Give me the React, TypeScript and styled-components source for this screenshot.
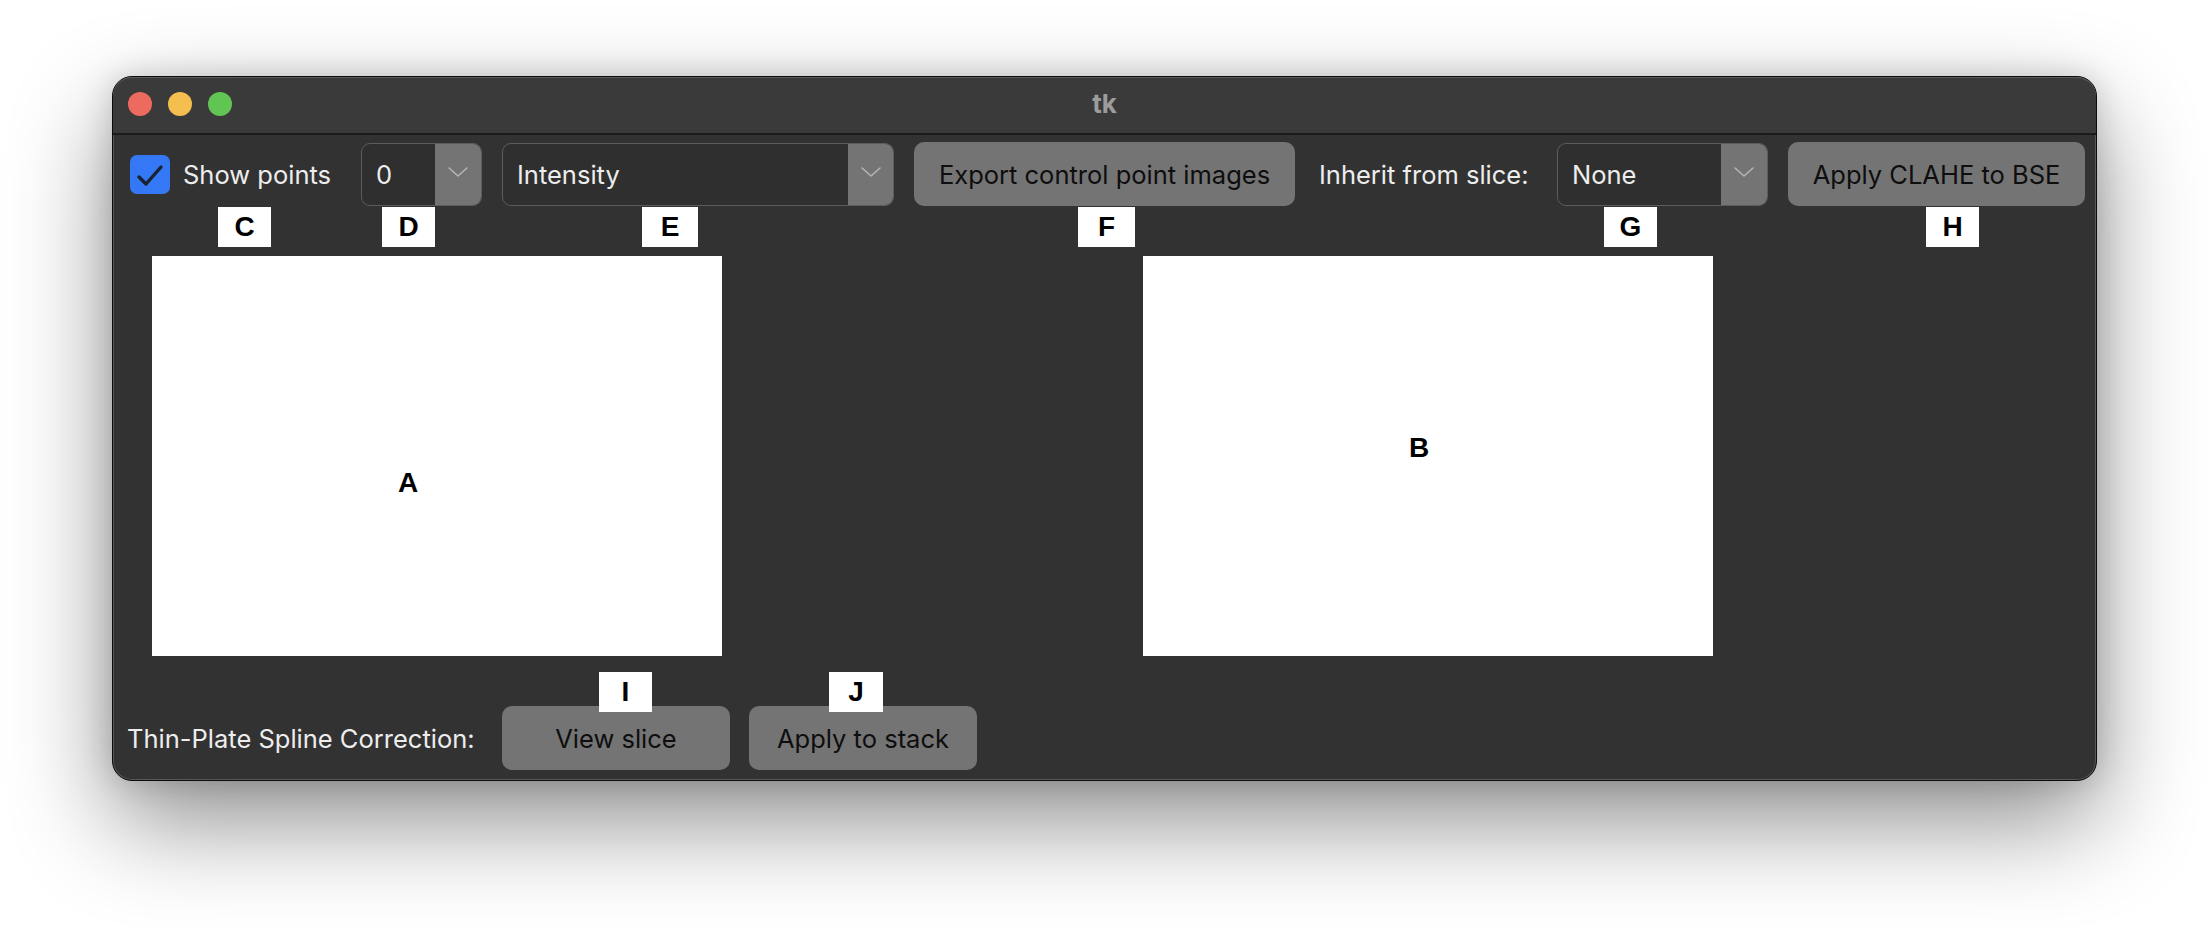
import * as React from "react";
import styled, { createGlobalStyle } from "styled-components";

const GlobalStyle = createGlobalStyle`
  html, body {
    margin: 0;
    padding: 0;
    background: #ffffff;
  }
  * {
    box-sizing: border-box;
  }
`;

const uiFont = `"Inter", "Noto Sans", "DejaVu Sans", sans-serif`;
const markFont = `"Liberation Sans", Arial, sans-serif`;

const Page = styled.div`
  width: 2208px;
  height: 928px;
  padding: 76px 0 0 112px;
  background: #ffffff;
  overflow: hidden;
`;

const Window = styled.div`
  position: relative;
  width: 1985px;
  height: 705px;
  border: 1px solid #0c0c0c;
  border-radius: 20px;
  background: #323232;
  box-shadow: inset 0 0 0 1px #575757, 0 40px 100px rgba(0, 0, 0, 0.45),
    0 0 30px rgba(0, 0, 0, 0.16);
  font-family: ${uiFont};
  display: flex;
  flex-direction: column;
`;

const TitleBar = styled.div`
  height: 58px;
  flex-shrink: 0;
  display: grid;
  grid-template-columns: 1fr auto 1fr;
  align-items: center;
  padding: 0 15px;
  background: #3a3a3a;
  border-bottom: 2px solid #1a1a1a;
  border-radius: 19px 19px 0 0;
  box-shadow: inset 0 1px 0 #5a5a5a;
`;

const Lights = styled.div`
  display: flex;
  gap: 16px;
  margin-top: -2px;
`;

const Light = styled.span<{ $color: string }>`
  width: 24px;
  height: 24px;
  border-radius: 50%;
  background: ${p => p.$color};
`;

const Title = styled.div`
  color: #9c9c9c;
  font-weight: 700;
  font-size: 26px;
  margin-top: -3px;
`;

const Body = styled.div`
  flex: 1;
  display: flex;
  flex-direction: column;
  padding: 7px 11px 10px 14px;
`;

const Toolbar = styled.div`
  display: grid;
  grid-template-columns: 211px 121px 392px 381px 222px 211px 297px;
  column-gap: 20px;
  height: 64px;
  align-items: center;
  padding-left: 3px;
`;

const CheckCell = styled.label`
  display: flex;
  align-items: center;
  gap: 13px;
`;

const CheckBox = styled.span`
  width: 40px;
  height: 39px;
  border-radius: 7px;
  background: #3478f6;
  display: flex;
  align-items: center;
  justify-content: center;
`;

const Label = styled.span<{ $pad?: number }>`
  color: #ededed;
  font-size: 25.5px;
  white-space: nowrap;
  padding-left: ${p => p.$pad || 0}px;
`;

const Combo = styled.div`
  display: flex;
  height: 63px;
  border: 1.5px solid #5c5c5c;
  border-radius: 9px;
  overflow: hidden;
  background: #2f2f2f;
`;

const ComboValue = styled.div`
  flex: 1;
  display: flex;
  align-items: center;
  padding-left: 14px;
  color: #ededed;
  font-size: 25.5px;
`;

const ComboArrow = styled.div<{ $w: number }>`
  width: ${p => p.$w}px;
  background: #747474;
  display: flex;
  align-items: center;
  justify-content: center;
  padding-bottom: 4px;
`;

const Button = styled.button.attrs({ type: "button" })<{ $w?: number }>`
  font: inherit;
  font-family: ${uiFont};
  font-size: 25.5px;
  color: #0e0e0e;
  background: #747474;
  border: 0;
  border-radius: 10px;
  height: 64px;
  width: ${p => (p.$w ? `${p.$w}px` : "100%")};
  padding: 0;
  white-space: nowrap;
  cursor: pointer;
`;

const Images = styled.div`
  display: flex;
  gap: 421px;
  margin-top: 50px;
  padding-left: 25px;
`;

const Canvas = styled.div`
  position: relative;
  width: 570px;
  height: 400px;
  background: #ffffff;
`;

const CanvasMark = styled.span`
  position: absolute;
  transform: translate(-50%, -50%);
  font-family: ${markFont};
  font-weight: 700;
  font-size: 28px;
  color: #000;
`;

const BottomRow = styled.div`
  display: flex;
  align-items: center;
  gap: 20px;
  margin-top: 50px;
  height: 64px;
`;

const BottomLabel = styled(Label)`
  width: 355px;
`;

const Badge = styled.span<{ $w: number }>`
  position: absolute;
  width: ${p => p.$w}px;
  height: 40px;
  background: #ffffff;
  color: #000;
  font-family: ${markFont};
  font-weight: 700;
  font-size: 28px;
  display: flex;
  align-items: center;
  justify-content: center;
  z-index: 2;
`;

function Chevron() {
  return (
    <svg width="20" height="10" viewBox="0 0 20 10">
      <polyline
        points="1,1 10,9 19,1"
        fill="none"
        stroke="#b4b4b4"
        strokeWidth="1.6"
        strokeLinecap="round"
        strokeLinejoin="round"
      />
    </svg>
  );
}

function Check() {
  return (
    <svg width="40" height="39" viewBox="0 0 40 39">
      <polyline
        points="9,22 16,29 31,12"
        fill="none"
        stroke="#1a2130"
        strokeWidth="3.4"
        strokeLinecap="round"
        strokeLinejoin="round"
      />
    </svg>
  );
}

function ComboBox(props: { value: string; arrow: number }) {
  return (
    <Combo>
      <ComboValue>{props.value}</ComboValue>
      <ComboArrow $w={props.arrow}>
        <Chevron />
      </ComboArrow>
    </Combo>
  );
}

const badges = [
  { letter: "C", x: 105, y: 130, w: 53 },
  { letter: "D", x: 269, y: 130, w: 53 },
  { letter: "E", x: 529, y: 130, w: 56 },
  { letter: "F", x: 965, y: 130, w: 57 },
  { letter: "G", x: 1491, y: 130, w: 53 },
  { letter: "H", x: 1813, y: 130, w: 53 },
  { letter: "I", x: 486, y: 595, w: 53 },
  { letter: "J", x: 716, y: 595, w: 54 }
];

export default function App() {
  return (
    <Page>
      <GlobalStyle />
      <Window>
        <TitleBar>
          <Lights>
            <Light $color="#ed6a5e" />
            <Light $color="#f5bf4f" />
            <Light $color="#61c554" />
          </Lights>
          <Title>tk</Title>
          <div />
        </TitleBar>
        <Body>
          <Toolbar>
            <CheckCell>
              <CheckBox>
                <Check />
              </CheckBox>
              <Label>Show points</Label>
            </CheckCell>
            <ComboBox value="0" arrow={46} />
            <ComboBox value="Intensity" arrow={45} />
            <Button>Export control point images</Button>
            <Label $pad={4}>Inherit from slice:</Label>
            <ComboBox value="None" arrow={46} />
            <Button>Apply CLAHE to BSE</Button>
          </Toolbar>
          <Images>
            <Canvas>
              <CanvasMark style={{ left: 256, top: 227 }}>A</CanvasMark>
            </Canvas>
            <Canvas>
              <CanvasMark style={{ left: 276, top: 192 }}>B</CanvasMark>
            </Canvas>
          </Images>
          <BottomRow>
            <BottomLabel>Thin-Plate Spline Correction:</BottomLabel>
            <Button $w={228}>View slice</Button>
            <Button $w={228} style={{ marginLeft: -1 }}>
              Apply to stack
            </Button>
          </BottomRow>
        </Body>
        {badges.map(b => (
          <Badge key={b.letter} $w={b.w} style={{ left: b.x, top: b.y }}>
            {b.letter}
          </Badge>
        ))}
      </Window>
    </Page>
  );
}
